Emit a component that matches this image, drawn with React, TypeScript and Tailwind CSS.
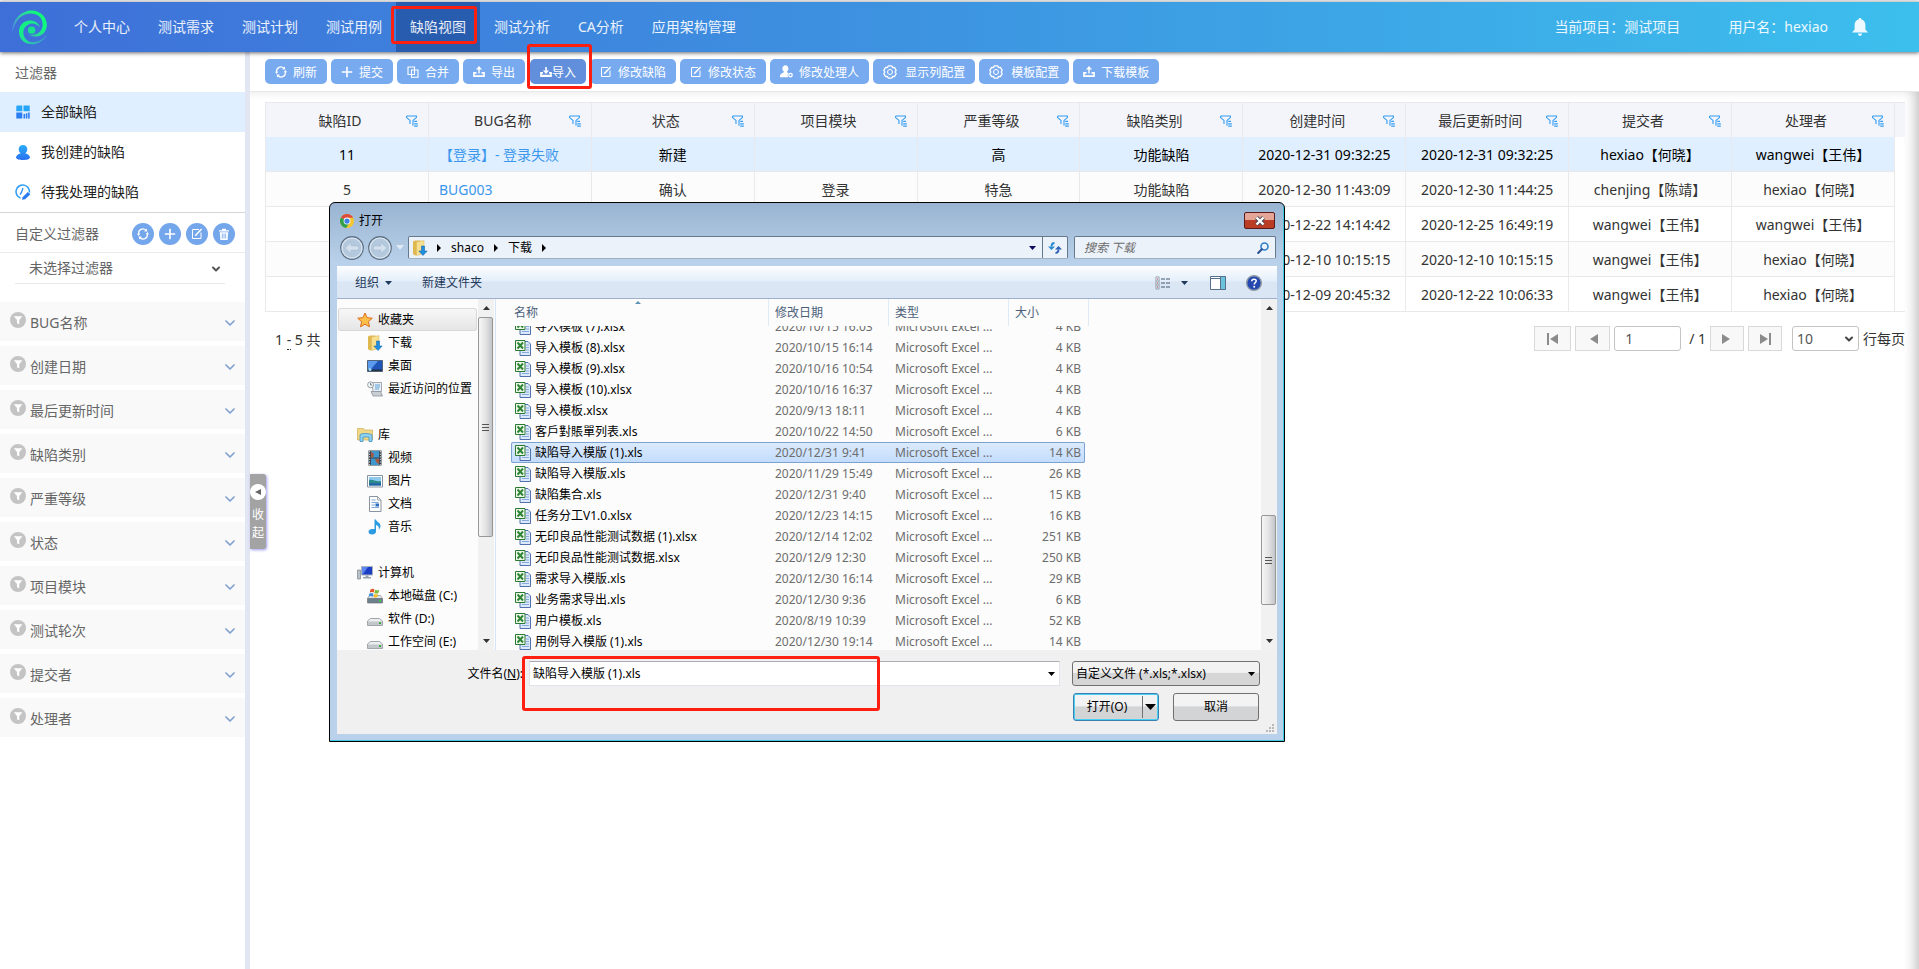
import React from "react";
import clsx from "clsx";
import { ChevronDown } from "lucide-react";

/* ---------- icons: web application ---------- */

const Logo = () => (
  <svg viewBox="0 0 108 104" className="h-[35px] w-[36px]" aria-hidden="true">
    <defs>
      <linearGradient id="swirlA" x1="0" y1="0.8" x2="1" y2="0.3">
        <stop offset="0" stopColor="#4f86ea" />
        <stop offset="0.4" stopColor="#38c6a8" />
        <stop offset="0.8" stopColor="#10fb7c" />
      </linearGradient>
      <linearGradient id="swirlB" x1="0" y1="0.2" x2="1" y2="1">
        <stop offset="0" stopColor="#10f57f" />
        <stop offset="0.5" stopColor="#22dd98" />
        <stop offset="1" stopColor="#4a86e6" />
      </linearGradient>
    </defs>
    <path fill="url(#swirlA)" d="M1 68C0 22 34 -1 62 1C92 4 107 28 104 49C100 75 76 87 50 74C76 76 90 64 92 46C93 22 77 9 54 10C28 11 9 30 1 68Z" />
    <path fill="url(#swirlB)" d="M107 70C94 96 72 106 50 101C29 96 20 78 21 62C23 40 42 28 62 32C72 34 80 40 84 51C72 40 58 37 48 44C35 51 31 65 36 78C42 92 57 99 73 95C90 90 99 82 107 70Z" />
    <circle cx="59" cy="60" r="11" fill="#18e28d" />
  </svg>
);

const Bell = () => (
  <svg viewBox="0 0 16 18" className="h-[18px] w-4" fill="#eef8ff" aria-hidden="true">
    <path d="M8 0c.8 0 1.200.5 1.200 1.300C12 2 13.400 4.400 13.400 7v4.500L16 14.500H0l2.600-3V7C2.600 4.400 4 2 6.800 1.300 6.800.5 7.200 0 8 0zM6 15.500h4C10 17 9 18 8 18s-2-1-2-2.500z" />
  </svg>
);

type IconProps = { className?: string };

const RefreshIcon = ({ className }: IconProps) => (
  <svg viewBox="0 0 12 12" className={className} fill="none" stroke="#fff" strokeWidth="1.300" aria-hidden="true">
    <path d="M1.600 7V5.500A4.200 4.200 0 0 1 8.800 2.300M10.400 5v1.500A4.200 4.200 0 0 1 3.200 9.700" />
    <path fill="#fff" stroke="none" d="M7.200 3.600L10.400 3.400 9.600.4zM4.800 8.400L1.600 8.600l.8 3zM0 5.800h3.200L1.600 8zM8.800 6.200H12L10.400 4z" />
  </svg>
);
const PlusIcon = ({ className }: IconProps) => (
  <svg viewBox="0 0 12 12" className={className} fill="none" stroke="#fff" strokeWidth="1.600" aria-hidden="true">
    <path d="M6 .8v10.400M.8 6h10.400" />
  </svg>
);
const MergeIcon = ({ className }: IconProps) => (
  <svg viewBox="0 0 12 12" className={className} fill="none" stroke="#fff" strokeWidth="1.100" aria-hidden="true">
    <path d="M1 1h6.500v7.500H1zM4.500 4H11v7.200H4.500z" />
  </svg>
);
const UploadIcon = ({ className }: IconProps) => (
  <svg viewBox="0 0 12 12" className={className} fill="none" stroke="#fff" strokeWidth="1.400" aria-hidden="true">
    <path d="M6 7.500V1.500" />
    <path fill="#fff" stroke="none" d="M6 0L9 3.600H3z" />
    <path strokeWidth="1.700" d="M3.500 6.800H1v3.400h10V6.800H8.500" />
  </svg>
);
const ImportIcon = ({ className }: IconProps) => (
  <svg viewBox="0 0 12 12" className={className} aria-hidden="true">
    <path fill="#fff" d="M5.200 1h1.600v3.500h2.400L6 8 2.800 4.500h2.400z" />
    <path fill="none" stroke="#fff" strokeWidth="1.700" d="M3 6.800H1v3.400h10V6.800H9M1 9.500h10" />
  </svg>
);
const EditIcon = ({ className }: IconProps) => (
  <svg viewBox="0 0 12 12" className={className} fill="none" stroke="#fff" strokeWidth="1" aria-hidden="true">
    <path d="M8 1.500H1.500v9h8.500V4.500" />
    <path d="M4.200 7.800L10.600 1" strokeWidth="1.500" />
  </svg>
);
const UserIcon = ({ className }: IconProps) => (
  <svg viewBox="0 0 12 12" className={className} fill="#fff" aria-hidden="true">
    <path d="M5 .3c1.700 0 2.800 1.300 2.800 3 0 1.200-.5 2-1.300 2.700v.7l1.300.6c-.9 1-1 2.700-.2 3.900H0V9.800C0 8.500 1.800 7.800 3.500 6.700V6C2.700 5.300 2.200 4.500 2.200 3.300 2.200 1.600 3.300.3 5 .3z" />
    <circle cx="9.700" cy="9.300" r="1.600" fill="none" stroke="#fff" strokeWidth="1.200" />
  </svg>
);
const GearIcon = ({ className }: IconProps) => (
  <svg viewBox="0 0 14 14" className={className} fill="none" stroke="#fff" aria-hidden="true">
    <path d="M5.200.9h3.600l.7 1.700 1.900-.2 1.800 3L12.100 7l1.100 1.600-1.800 3-1.900-.2-.7 1.700H5.200l-.7-1.700-1.900.2-1.800-3L1.900 7 .8 5.400l1.800-3 1.900.2z" strokeWidth="1.300" strokeLinejoin="round" />
    <path d="M7 4.300l2.300 1.350v2.700L7 9.700 4.700 8.350v-2.700z" strokeWidth="1" />
  </svg>
);
const TrashIcon = ({ className }: IconProps) => (
  <svg viewBox="0 0 12 12" className={className} aria-hidden="true">
    <path fill="#fff" d="M1 2.200h3V.8h4v1.400h3v1.200H1zM1.800 4.200h8.400L9.600 12H2.400z" />
    <path stroke="#74a6ec" strokeWidth=".8" d="M4.300 5.500v5M6 5.500v5M7.700 5.500v5" />
  </svg>
);

const ColumnFilterIcon = () => (
  <svg viewBox="0 0 12 12" className="h-3 w-3 shrink-0" fill="none" stroke="#2f9bf4" aria-hidden="true">
    <path strokeWidth="1.100" d="M.6 1h9.800v1.600L7 5.400v5.400M.6 1v1.600L4 5.400V9" />
    <path strokeWidth="1.300" d="M8.200 6.400H11M8.200 8.800h3.600M8.200 11.200h3.600" />
  </svg>
);

const FunnelBadge = () => (
  <svg viewBox="0 0 16 16" className="mb-1.5 h-4 w-4 shrink-0" aria-hidden="true">
    <circle cx="8" cy="8" r="8" fill="#c4c4c4" />
    <path fill="#fff" d="M3.800 4.200h8.600L9.300 8v4.300l-2.300-1V8z" />
  </svg>
);

const GridIcon = () => (
  <svg viewBox="0 0 14 14" className="h-3.5 w-3.5" aria-hidden="true">
    <path fill="#27a5f8" d="M1 .5h5.300v5.800H.3V1.200zM7.500.5H13.700v5.800H7.500z" />
    <path fill="#2b7df3" d="M.3 7.500h6v6h-6zM7.500 9h1.600v4.500H7.500zM9.800 8.200h1.600v5.300H9.800zM12.100 7.500h1.600v6h-1.600z" />
  </svg>
);
const PersonIcon = () => (
  <svg viewBox="0 0 14 15" className="h-[15px] w-3.5" aria-hidden="true">
    <defs>
      <linearGradient id="person" x1="0" y1="0" x2="0" y2="1">
        <stop offset="0" stopColor="#29adf8" />
        <stop offset="1" stopColor="#2a70f2" />
      </linearGradient>
    </defs>
    <path fill="url(#person)" d="M7 0c2.600 0 4.300 1.800 4.300 4.200 0 1.800-.9 3.200-2 4C12 9 14 10.500 14 12.500 14 14.200 10.500 15 7 15s-7-.8-7-2.500c0-2 2-3.500 4.700-4.300-1.100-.8-2-2.200-2-4C2.700 1.800 4.400 0 7 0z" />
  </svg>
);
const PendingIcon = () => (
  <svg viewBox="0 0 16 16" className="h-4 w-4" fill="none" aria-hidden="true">
    <path stroke="#2b9df6" strokeWidth="1.500" d="M5.500 14A6.700 6.700 0 1 1 14.400 8.500" />
    <path stroke="#2b8cf4" strokeWidth="1.300" d="M8 4L6.500 8.500 5 10.500" />
    <path fill="#2a7af2" d="M7 15.800l.6-2.600 5.200-5.300 2.600 2.400-5.300 5z" />
  </svg>
);

/* ---------- icons: file dialog ---------- */

const svg16 = "h-4 w-4 shrink-0";

const ChromeIcon = () => (
  <svg viewBox="0 0 16 16" className="h-3.5 w-3.5" aria-hidden="true">
    <circle cx="8" cy="8" r="8" fill="#f6c62f" />
    <path fill="#dd4b3e" d="M8 8L1.100 4A8 8 0 0 1 15 4.200H8z" />
    <path fill="#2fa04f" d="M8 8L1.100 4a8 8 0 0 0 5.800 11.900L11 9.800z" />
    <circle cx="8" cy="8" r="3.900" fill="#fff" />
    <circle cx="8" cy="8" r="3" fill="#3f7fe8" />
  </svg>
);
const DownloadFolder = () => (
  <svg viewBox="0 0 16 16" className={svg16} aria-hidden="true">
    <path fill="#e0b850" d="M1 1.500L3 .5h5.500v13L3 15.500 1 14z" />
    <path fill="#f7df90" stroke="#d9b45a" strokeWidth=".5" d="M4.500 2L12 .6v12.900l-7.500 2z" />
    <path fill="#1f8fe0" stroke="#0f5fa8" strokeWidth=".5" d="M9.500 6h3v5h2.700L11 15.500 6.800 11h2.700z" />
  </svg>
);
const StarIcon = () => (
  <svg viewBox="0 0 16 16" className={svg16} aria-hidden="true">
    <path fill="#fcc04a" stroke="#dd6f1c" d="M8 1l2.100 4.700 5.200.5-3.900 3.500 1.100 5.100L8 12.200l-4.500 2.600 1.100-5.100L.7 6.200l5.200-.5z" />
  </svg>
);
const DesktopIcon = () => (
  <svg viewBox="0 0 16 16" className={svg16} aria-hidden="true">
    <path fill="#1f56b8" stroke="#53637c" d="M.5 2.500h15v11H.5z" />
    <path fill="#5b9bee" d="M1 3h10L4 11H1z" />
    <path fill="#26303f" d="M1 11.500h14V13H1z" />
    <circle cx="3" cy="11.500" r="1.500" fill="#9bd8f5" />
  </svg>
);
const RecentIcon = () => (
  <svg viewBox="0 0 16 16" className={svg16} aria-hidden="true">
    <path fill="#e9eef3" stroke="#8c969f" strokeWidth=".8" d="M5 1.500h9.500v9H6z" />
    <path stroke="#5aa2dc" d="M8 4h5M8 6h5M8 8h4" />
    <path fill="#c9ced3" stroke="#8c969f" strokeWidth=".8" d="M4 10.500h9.500l2 4.500H6z" />
    <circle cx="3.600" cy="3.800" r="3" fill="#f4f7f9" stroke="#8c969f" strokeWidth=".9" />
    <path stroke="#55606a" strokeWidth=".8" fill="none" d="M3.600 2v2h1.500" />
  </svg>
);
const LibraryIcon = () => (
  <svg viewBox="0 0 16 16" className={svg16} aria-hidden="true">
    <path fill="#f0d886" stroke="#cfae55" strokeWidth=".7" d="M.5 1.500h6l1 1.500h8v10H.5z" />
    <path fill="#8fd2f2" stroke="#3e92c4" strokeWidth=".8" d="M3 8c0-2 10-2 12 0v6.500h-3V10H6v4.500H3z" />
  </svg>
);
const VideoIcon = () => (
  <svg viewBox="0 0 16 16" className={svg16} aria-hidden="true">
    <path fill="#333c44" d="M1.500.5h13v15h-13z" />
    <path fill="#3f97cf" d="M4 1h8v6.500H4zM4 8.500h8V15H4z" />
    <path fill="#a8583f" d="M4 1.500l3 2.500-1 3.500H4zM12 8.500l-4 1 1.500 3L12 14z" />
    <path stroke="#dfe6ea" strokeDasharray="1.300 1.300" d="M2.700 1v14M13.300 1v14" />
  </svg>
);
const PictureIcon = () => (
  <svg viewBox="0 0 16 16" className={svg16} aria-hidden="true">
    <path fill="#fff" stroke="#8894a0" d="M.5 2.500h15v11.500H.5z" />
    <path fill="#8ec9ee" d="M2 4h12v5H2z" />
    <path fill="#2c8a8c" d="M2 7c4-1 7 2 12 1v4.500H2z" />
    <path fill="#2462a8" d="M2 10.500c4-1 8 .5 12-.5v2.500H2z" />
  </svg>
);
const DocIcon = () => (
  <svg viewBox="0 0 16 16" className={svg16} aria-hidden="true">
    <path fill="#fdfdfe" stroke="#8a94a0" d="M2.500.5h8l3.500 3.500v11.500H2.500z" />
    <path fill="none" stroke="#8a94a0" strokeWidth=".8" d="M10.500.5V4H14" />
    <path stroke="#6d9fd0" strokeWidth=".9" d="M4.500 4h4M4.500 6.500h7M4.500 9H8M4.500 11.500H12" />
    <path fill="#2a6fc0" d="M8.500 7.500h3.500v3H8.500z" />
  </svg>
);
const MusicIcon = () => (
  <svg viewBox="0 0 16 16" className={svg16} aria-hidden="true">
    <path fill="#2c9be0" d="M7.500.5h1.300C9.500 3 13.500 3.500 13.500 7c0 2-1 3-1.800 3.500.8-2.500-.7-4-2.700-4.500v6.500c0 2-1.700 3-4 3s-3.500-1.200-3.500-2.700c0-1.800 2-3 4-2.800h2z" />
  </svg>
);
const ComputerIcon = () => (
  <svg viewBox="0 0 16 16" className={svg16} aria-hidden="true">
    <path fill="#b9c1c9" stroke="#7a848e" strokeWidth=".7" d="M.5 5h3v9h-3z" />
    <path fill="#1b3fc4" stroke="#a9b3bd" d="M4.500 1.500h11v8.500h-11z" />
    <path fill="#5b86f0" d="M5 2h6L6 9H5z" />
    <path fill="#98a2ac" d="M8.500 10.500h3V12h2.500v1.500H6V12h2.500z" />
  </svg>
);
const DriveIcon = ({ system = false }: { system?: boolean }) => (
  <svg viewBox="0 0 16 16" className={svg16} aria-hidden="true">
    {system ? (
      <g>
        <path fill="#dfe3e6" stroke="#8b9298" strokeWidth=".7" d="M2.500 7.500h11l2 3H.5z" />
        <path fill="#6b7f8c" stroke="#70777d" strokeWidth=".7" d="M.5 10.500h15V15H.5z" />
        <path fill="#37d53b" d="M12 12h2v1.800h-2z" />
        <path fill="#e5582c" d="M3.500 1.500c1.500-1 2.800-.8 4 0L6.700 4.600c-1.300-.8-2.600-.8-4 0z" />
        <path fill="#7cbb3a" d="M8.200 1.700c1.500.8 2.600.8 4.100 0l-.9 3.200c-1.400.8-2.600.7-4 0z" />
        <path fill="#3d8ddd" d="M2.400 5.500c1.500-.8 2.700-.7 4 0l-.8 3.200c-1.400-.8-2.600-.8-4 0z" />
        <path fill="#f6c02e" d="M7.200 5.800c1.400.8 2.600.8 4 0L10.400 9c-1.500.8-2.700.8-4 0z" />
      </g>
    ) : (
      <g>
        <path fill="#eceeef" stroke="#8b9298" strokeWidth=".8" d="M3.500 7.500h9l3 2.500v4.500H.5V10z" />
        <path fill="#c2c7cb" d="M1 10.500h14V14H1z" />
        <path fill="#2fa833" d="M12 11.300h2v1.800h-2z" />
      </g>
    )}
  </svg>
);
const ExcelIcon = () => (
  <svg viewBox="0 0 16 16" className={svg16} aria-hidden="true">
    <path fill="#dce9fb" stroke="#3f62a8" strokeWidth=".9" d="M5 1.500h8l2.500 2.500v11.500H5z" />
    <path stroke="#7ea2da" strokeWidth=".9" d="M11 5h3M11 7.500h3M11 10h3M7 12.500h7" />
    <path fill="#eef7ea" stroke="#2c7a32" d="M.5.5h9.500v10H.5z" />
    <path stroke="#2c8434" strokeWidth="1.900" d="M2.500 2.500l5.500 6M8 2.500l-5.500 6" />
  </svg>
);

const Caret = ({ color = "#000", className = "h-1 w-[7px]" }: { color?: string; className?: string }) => (
  <svg viewBox="0 0 8 4" className={clsx("shrink-0", className)} preserveAspectRatio="none" aria-hidden="true">
    <path fill={color} d="M0 0h8L4 4z" />
  </svg>
);
const Crumb = () => (
  <svg viewBox="0 0 4 8" className="h-2 w-1 shrink-0" aria-hidden="true">
    <path d="M0 0v8l4-4z" />
  </svg>
);

/* ---------- data ---------- */

const navItems = ["个人中心", "测试需求", "测试计划", "测试用例", "缺陷视图", "测试分析", "CA分析", "应用架构管理"];

const views = [
  { label: "全部缺陷", icon: <GridIcon />, active: true },
  { label: "我创建的缺陷", icon: <PersonIcon />, active: false },
  { label: "待我处理的缺陷", icon: <PendingIcon />, active: false },
];

const filters = ["BUG名称", "创建日期", "最后更新时间", "缺陷类别", "严重等级", "状态", "项目模块", "测试轮次", "提交者", "处理者"];

const compact = { icon: "h-3 w-3", gap: "gap-1.5" };
const medium = { icon: "h-[13px] w-[13px]", gap: "gap-1.5" };
const roomy = { icon: "h-3.5 w-3.5", gap: "gap-2" };

const actions = [
  { label: "刷新", Icon: RefreshIcon, size: compact },
  { label: "提交", Icon: PlusIcon, size: compact },
  { label: "合并", Icon: MergeIcon, size: compact },
  { label: "导出", Icon: UploadIcon, size: compact },
  { label: "导入", Icon: ImportIcon, size: compact },
  { label: "修改缺陷", Icon: EditIcon, size: compact },
  { label: "修改状态", Icon: EditIcon, size: compact },
  { label: "修改处理人", Icon: UserIcon, size: medium },
  { label: "显示列配置", Icon: GearIcon, size: roomy },
  { label: "模板配置", Icon: GearIcon, size: roomy },
  { label: "下载模板", Icon: UploadIcon, size: compact },
];

const columns = ["缺陷ID", "BUG名称", "状态", "项目模块", "严重等级", "缺陷类别", "创建时间", "最后更新时间", "提交者", "处理者"];

const bugs = [
  ["11", "【登录】- 登录失败", "新建", "", "高", "功能缺陷", "2020-12-31 09:32:25", "2020-12-31 09:32:25", "hexiao【何晓】", "wangwei【王伟】"],
  ["5", "BUG003", "确认", "登录", "特急", "功能缺陷", "2020-12-30 11:43:09", "2020-12-30 11:44:25", "chenjing【陈靖】", "hexiao【何晓】"],
  ["", "", "", "", "", "", "2020-12-22 14:14:42", "2020-12-25 16:49:19", "wangwei【王伟】", "wangwei【王伟】"],
  ["", "", "", "", "", "", "2020-12-10 10:15:15", "2020-12-10 10:15:15", "wangwei【王伟】", "hexiao【何晓】"],
  ["", "", "", "", "", "", "2020-12-09 20:45:32", "2020-12-22 10:06:33", "wangwei【王伟】", "hexiao【何晓】"],
];

const places = [
  {
    label: "收藏夹",
    icon: <StarIcon />,
    children: [
      { label: "下载", icon: <DownloadFolder /> },
      { label: "桌面", icon: <DesktopIcon /> },
      { label: "最近访问的位置", icon: <RecentIcon /> },
    ],
  },
  {
    label: "库",
    icon: <LibraryIcon />,
    children: [
      { label: "视频", icon: <VideoIcon /> },
      { label: "图片", icon: <PictureIcon /> },
      { label: "文档", icon: <DocIcon /> },
      { label: "音乐", icon: <MusicIcon /> },
    ],
  },
  {
    label: "计算机",
    icon: <ComputerIcon />,
    children: [
      { label: "本地磁盘 (C:)", icon: <DriveIcon system /> },
      { label: "软件 (D:)", icon: <DriveIcon /> },
      { label: "工作空间 (E:)", icon: <DriveIcon /> },
    ],
  },
];

const files = [
  ["导入模板 (7).xlsx", "2020/10/15 16:03", "4 KB"],
  ["导入模板 (8).xlsx", "2020/10/15 16:14", "4 KB"],
  ["导入模板 (9).xlsx", "2020/10/16 10:54", "4 KB"],
  ["导入模板 (10).xlsx", "2020/10/16 16:37", "4 KB"],
  ["导入模板.xlsx", "2020/9/13 18:11", "4 KB"],
  ["客戶對賬單列表.xls", "2020/10/22 14:50", "6 KB"],
  ["缺陷导入模版 (1).xls", "2020/12/31 9:41", "14 KB"],
  ["缺陷导入模版.xls", "2020/11/29 15:49", "26 KB"],
  ["缺陷集合.xls", "2020/12/31 9:40", "15 KB"],
  ["任务分工V1.0.xlsx", "2020/12/23 14:15", "16 KB"],
  ["无印良品性能测试数据 (1).xlsx", "2020/12/14 12:02", "251 KB"],
  ["无印良品性能测试数据.xlsx", "2020/12/9 12:30", "250 KB"],
  ["需求导入模版.xls", "2020/12/30 16:14", "29 KB"],
  ["业务需求导出.xls", "2020/12/30 9:36", "6 KB"],
  ["用户模板.xls", "2020/8/19 10:39", "52 KB"],
  ["用例导入模版 (1).xls", "2020/12/30 19:14", "14 KB"],
];
const selectedFile = "缺陷导入模版 (1).xls";

/* ---------- page parts ---------- */

const Highlight = ({ className }: { className: string }) => (
  <span className={clsx("pointer-events-none absolute z-30 rounded-[3px] border-3 border-[#ff1f10]", className)} />
);

function TopBar() {
  return (
    <header className="relative z-20 flex h-[51px] items-stretch border-t border-[#cfcfcf] bg-linear-to-r from-[#3e6fd8] via-[#3d95e1] to-[#3cbfed] text-sm text-white/90 shadow-[0_1px_4px_rgba(0,0,0,0.6)]">
      <div className="flex w-[60px] items-center pl-3">
        <Logo />
      </div>
      <nav className="flex">
        {navItems.map((item) => (
          <a
            key={item}
            href="#"
            className={clsx("relative flex items-center px-3.5", item === "缺陷视图" && "bg-[#285cae]")}
          >
            {item}
            {item === "缺陷视图" && <Highlight className="top-[4px] -left-[5px] h-[38px] w-[86px]" />}
          </a>
        ))}
      </nav>
      <div className="ml-auto flex items-center pr-[51px]">
        <span>当前项目：测试项目</span>
        <span className="ml-12">用户名：hexiao</span>
        <button type="button" aria-label="通知" className="ml-6">
          <Bell />
        </button>
      </div>
    </header>
  );
}

function Sidebar() {
  return (
    <aside className="w-[250px] shrink-0 border-r-5 border-[#e2e5f2] bg-white text-sm text-[#666]">
      <h2 className="flex h-10 items-center px-[15px] pt-[2px]">过滤器</h2>
      <ul className="border-b border-[#d5d5d5] text-[#222]">
        {views.map((v) => (
          <li key={v.label}>
            <a href="#" className={clsx("flex h-10 items-center gap-2.5 px-[15px]", v.active && "bg-[#dfefff]")}>
              <span className="flex w-4 justify-center">{v.icon}</span>
              {v.label}
            </a>
          </li>
        ))}
      </ul>
      <div className="flex h-10 items-center justify-between border-b border-[#ebebeb] pt-[2px] pr-2.5 pl-[15px]">
        <h2>自定义过滤器</h2>
        <div className="flex gap-[5px]">
          {[
            { name: "刷新过滤器", Icon: RefreshIcon },
            { name: "新建过滤器", Icon: PlusIcon },
            { name: "编辑过滤器", Icon: EditIcon },
            { name: "删除过滤器", Icon: TrashIcon },
          ].map(({ name, Icon }) => (
            <button key={name} type="button" aria-label={name} className="flex h-[22px] w-[22px] items-center justify-center rounded-full bg-[#74a6ec]">
              <Icon className="h-3 w-3" />
            </button>
          ))}
        </div>
      </div>
      <div className="relative mr-5 ml-[15px] border-b border-[#e8e8e8]">
        <select aria-label="选择过滤器" className="h-[30px] w-full appearance-none bg-transparent pl-3.5">
          <option>未选择过滤器</option>
        </select>
        <ChevronDown className="pointer-events-none absolute top-2.5 right-[3px] h-3 w-3 text-[#555]" strokeWidth={4} />
      </div>
      <ul className="mt-[18px] flex flex-col gap-[5px]">
        {filters.map((f) => (
          <li key={f}>
            <button type="button" className="flex h-[39px] w-full items-center bg-[#f9f9f9] pt-[2px] pr-[7px] pl-2.5">
              <FunnelBadge />
              <span className="ml-1">{f}</span>
              <ChevronDown className="ml-auto h-4 w-4 text-[#7f9fcf]" strokeWidth={2.5} />
            </button>
          </li>
        ))}
      </ul>
    </aside>
  );
}

function Toolbar() {
  return (
    <div className="flex h-10 items-center gap-1 border-b border-[#e9e9e9] pl-[15px] text-xs text-white">
      {actions.map(({ label, Icon, size }) => {
        const isImport = label === "导入";
        return (
          <button
            key={label}
            type="button"
            className={clsx(
              "relative flex h-[25px] items-center rounded-[5px] px-2.5",
              isImport ? "ml-px bg-[#618fdc]" : "bg-[#78aaef]",
              !isImport && size.gap,
            )}
          >
            <Icon className={clsx("shrink-0", size.icon)} />
            <span className="pt-[2px]">{label}</span>
            {isImport && <Highlight className="-top-[15px] -left-[3px] h-[45px] w-[65px]" />}
          </button>
        );
      })}
    </div>
  );
}

function BugTable() {
  return (
    <table className="w-full table-fixed border-separate border-spacing-0 border-t border-l border-[#e9e9ec] text-center text-sm text-[#333]">
      <colgroup>
        {columns.map((c) => (
          <col key={c} />
        ))}
        <col className="w-2.5" />
      </colgroup>
      <thead>
        <tr className="h-[34px] bg-[#f4f5fa]">
          {columns.map((c) => (
            <th key={c} className="border-r border-[#e9e9ec] p-0 font-normal">
              <span className="flex items-center pt-[2px] pr-2.5 pl-2">
                <span className="flex-1 whitespace-nowrap">{c}</span>
                <ColumnFilterIcon />
              </span>
            </th>
          ))}
          <th className="p-0" />
        </tr>
      </thead>
      <tbody>
        {bugs.map((row, r) => (
          <tr key={r} className="h-[35px]">
            {row.map((cell, c) => (
              <td
                key={c}
                className={clsx(
                  "border-r border-b border-[#e9e9ec] p-0 pt-[2px] whitespace-nowrap",
                  r === 0 ? "bg-[#dfefff] text-black" : r % 2 ? "bg-[#fcfcfc]" : "bg-white",
                  c === 1 && "pl-2.5 text-left",
                )}
              >
                {c === 1 ? (
                  <a href="#" className="text-[#3b97ee]">
                    {cell}
                  </a>
                ) : (
                  cell
                )}
              </td>
            ))}
            <td className={clsx("p-0", r === bugs.length - 1 && "border-b border-[#e9e9ec]")} />
          </tr>
        ))}
      </tbody>
    </table>
  );
}

const pagerButton = "flex h-[25px] items-center justify-center border border-[#d9d9d9] bg-[#f8f8f8]";

const PagerGlyph = ({ flip = false, bar = false }: { flip?: boolean; bar?: boolean }) => (
  <svg viewBox="0 0 14 12" className={clsx("h-3 w-3.5", flip && "rotate-180")} fill="#8b8b8b" aria-hidden="true">
    {bar && <path d="M1 0h2v12H1z" />}
    <path d="M12 1v10L4 6z" />
  </svg>
);

function Pager() {
  return (
    <div className="mt-3.5 flex items-center pl-2.5 text-sm text-[#333]">
      <span className="pt-[2px]">
        1 <span className="border-b border-dotted border-[#333]">-</span> 5 共
      </span>
      <div className="ml-auto flex items-center">
        <button type="button" aria-label="第一页" className={clsx(pagerButton, "w-[37px]")}>
          <PagerGlyph bar />
        </button>
        <button type="button" aria-label="上一页" className={clsx(pagerButton, "ml-1 w-[35px]")}>
          <PagerGlyph />
        </button>
        <input aria-label="页码" defaultValue="1" className="ml-1 h-[25px] w-[67px] rounded-[3px] border border-[#c4c4c4] bg-white pl-2.5 text-[#555]" />
        <span className="mx-1 pl-1">/ 1</span>
        <button type="button" aria-label="下一页" className={clsx(pagerButton, "w-[34px]")}>
          <PagerGlyph flip />
        </button>
        <button type="button" aria-label="最后一页" className={clsx(pagerButton, "ml-1 w-[34px]")}>
          <PagerGlyph flip bar />
        </button>
        <span className="relative ml-2.5">
          <select id="page-size" className="h-[25px] w-[67px] appearance-none rounded-[3px] border border-[#c4c4c4] bg-white pl-1 text-[#555]">
            <option>10</option>
          </select>
          <ChevronDown className="pointer-events-none absolute top-[7px] right-1 h-3 w-3 text-[#444]" strokeWidth={4} />
        </span>
        <label htmlFor="page-size" className="ml-1">
          行每页
        </label>
      </div>
    </div>
  );
}

function ScrollTrack({ children }: { children: React.ReactNode }) {
  return (
    <div className="flex w-4 shrink-0 flex-col items-center bg-[#f1f1f1]" aria-hidden="true">
      <div className="flex h-[18px] items-center">
        <Caret color="#333" className="h-1 w-[7px] rotate-180" />
      </div>
      <div className="flex w-full flex-1 flex-col pr-px">{children}</div>
      <div className="flex h-[18px] items-center">
        <Caret color="#333" />
      </div>
    </div>
  );
}
const ScrollThumb = ({ className }: { className: string }) => (
  <div className={clsx("flex flex-col items-center justify-center gap-[2px] rounded-[2px] border border-[#979797] bg-linear-to-r from-[#f6f6f6] via-[#e4e4e5] to-[#c3c5c9]", className)}>
    <i className="h-px w-[7px] bg-[#555]" />
    <i className="h-px w-[7px] bg-[#555]" />
    <i className="h-px w-[7px] bg-[#555]" />
  </div>
);

const RoundNav = ({ flip = false, label }: { flip?: boolean; label: string }) => (
  <button type="button" aria-label={label} className="h-6 w-6">
    <svg viewBox="0 0 26 26" className={clsx("h-full w-full", flip && "rotate-180")} aria-hidden="true">
      <circle cx="13" cy="13" r="12.200" fill="#b4c9de" stroke="#5f7184" strokeWidth="1.400" />
      <circle cx="13" cy="13" r="10.800" fill="none" stroke="#dde8f2" strokeWidth="1.200" />
      <path fill="#d3e1ee" stroke="#a5bacd" strokeWidth=".6" d="M5.500 13L12 7v3.800h8v4.400h-8V19z" />
    </svg>
  </button>
);

const winButton = "flex h-7 items-center justify-center rounded-[3px] border bg-linear-to-b from-[#f3f3f3] from-45% to-[#d2d4d5] to-50%";
const fieldFrame = "flex h-[23px] items-center border border-[#66788c] border-b-[#9fb2c6] bg-[#ebf2fa]";

function FileDialog() {
  return (
    <section
      role="dialog"
      aria-label="打开"
      className="absolute top-[202px] left-[329px] z-30 w-[956px] rounded-t-[6px] border border-black bg-[#b9d1ea] bg-linear-to-b from-[#99b4d1] to-[#b9d1ea] to-[60px] px-[7px] pb-[7px] text-xs text-black shadow-[inset_-1px_-1px_0_#3cc8e0]"
    >
      <div className="flex h-[33px] items-center pt-[2px] pl-[3px]">
        <ChromeIcon />
        <span className="ml-[5px]">打开</span>
        <button
          type="button"
          aria-label="关闭"
          className="mr-0.5 ml-auto flex h-[17px] w-[31px] items-center justify-center rounded-[2px] border border-[#5b1a1c] bg-linear-to-b from-[#e5a698] from-45% to-[#bb3c25] to-50%"
        >
          <svg viewBox="0 0 12 10" className="h-2.5 w-3" aria-hidden="true">
            <path d="M2.500 1.500l7 7M9.500 1.500l-7 7" stroke="#4a4a55" strokeWidth="4.200" />
            <path d="M2.500 1.500l7 7M9.500 1.500l-7 7" stroke="#fff" strokeWidth="2.400" />
          </svg>
        </button>
      </div>

      <div className="flex h-[23px] items-center pl-[3px]">
        <RoundNav label="后退" />
        <span className="ml-1 flex">
          <RoundNav label="前进" flip />
        </span>
        <Caret color="#dfe9f4" className="mx-1 h-[5px] w-2" />
        <div className={clsx(fieldFrame, "flex-1 rounded-[2px] pl-[3px]")}>
          <DownloadFolder />
          <span className="ml-[9px] flex items-center gap-2.5">
            <Crumb />
            shaco
            <Crumb />
            下载
            <Crumb />
          </span>
          <span className="mr-1.5 ml-auto flex">
            <Caret color="#0a0a5a" />
          </span>
          <button type="button" aria-label="刷新" className="flex h-full w-[25px] items-center justify-center border-l border-[#66788c]">
            <svg viewBox="0 0 14 12" className="h-3 w-3.5" fill="none" aria-hidden="true">
              <path stroke="#2a8ad0" strokeWidth="1.800" d="M6.500 1C4.500 1 3.500 2 3.500 4.500" />
              <path fill="#2a8ad0" d="M0 4.500h7L3.500 8z" />
              <path stroke="#2a5fb4" strokeWidth="1.800" d="M7.500 11c2 0 3-1 3-3.500" />
              <path fill="#2a5fb4" d="M7 7.500h7L10.500 4z" />
            </svg>
          </button>
        </div>
        <div className={clsx(fieldFrame, "mr-px ml-1.5 w-[202px] rounded-[2px] pr-1.5 pl-[9px]")}>
          <input aria-label="搜索" placeholder="搜索 下载" className="min-w-0 flex-1 bg-transparent italic placeholder:text-[#6b6b6b]" />
          <svg viewBox="0 0 12 12" className="h-3 w-3" fill="none" aria-hidden="true">
            <circle cx="7.500" cy="4.500" r="3.500" stroke="#2f80c8" strokeWidth="1.600" />
            <path stroke="#2c4f92" strokeWidth="2" strokeLinecap="round" d="M4.800 7.300L1.200 11" />
          </svg>
        </div>
      </div>

      <div className="mt-[7px] flex h-[33px] items-center border-t border-b border-t-white border-b-[#9fb0cc] bg-linear-to-b from-[#fbfdff] via-[#e4eefa] via-45% to-[#dbe6f4] to-50% pr-[15px] pl-[18px] text-[#1e395b]">
        <button type="button" className="flex items-center gap-1.5">
          组织
          <Caret color="#1e395b" />
        </button>
        <button type="button" className="ml-[30px]">
          新建文件夹
        </button>
        <div className="ml-auto flex items-center">
          <button type="button" aria-label="更改视图" className="flex items-center gap-2.5">
            <svg viewBox="0 0 16 14" className="h-3.5 w-4" fill="none" aria-hidden="true">
              <path stroke="#8a96a4" strokeWidth=".8" d="M.9.9h3.200v12.200H.9zM.9 5h3.200M.9 9h3.200" />
              <path stroke="#44586e" strokeDasharray="4 1" d="M6 3h10M6 7h10M6 11h10" />
              <path fill="#c04030" d="M2 2.400h1v1H2zM2 6.500h1v1H2zM2 10.500h1v1H2z" />
            </svg>
            <Caret color="#1e395b" />
          </button>
          <button type="button" aria-label="预览窗格" className="ml-[22px]">
            <svg viewBox="0 0 16 14" className="h-3.5 w-4" aria-hidden="true">
              <path fill="#fff" stroke="#56708c" d="M.5.5h15v13H.5z" />
              <path stroke="#56708c" d="M.5 2.500h10" />
              <path fill="#6cc4dc" stroke="#56708c" d="M10.500.5h5v13h-5z" />
            </svg>
          </button>
          <button type="button" aria-label="帮助" className="ml-5">
            <svg viewBox="0 0 16 16" className="h-4 w-4" aria-hidden="true">
              <circle cx="8" cy="8" r="7.300" fill="#2448b0" stroke="#8d97a5" strokeWidth="1.400" />
              <path d="M5.800 6.200C5.800 3.500 10.200 3.500 10.200 6c0 1.600-2 1.700-2 3.400" stroke="#fff" strokeWidth="1.500" fill="none" />
              <circle cx="8.200" cy="11.700" r="1" fill="#fff" />
            </svg>
          </button>
        </div>
      </div>

      <div className="flex h-[351px] bg-[#fcfcfc]">
        <div className="w-[141px] shrink-0 overflow-hidden pt-[9px] pr-px pl-px">
          {places.map((group, g) => (
            <ul key={group.label} className={clsx(g > 0 && "mt-[23px]")}>
              <li
                className={clsx(
                  "flex h-[23px] items-center gap-[5px] pl-[19px]",
                  g === 0 && "rounded-[3px] bg-linear-to-b from-[#f8f8f8] to-[#e5e5e5] shadow-[inset_0_0_0_1px_#d9d9d9]",
                )}
              >
                {group.icon}
                {group.label}
              </li>
              {group.children.map((p) => (
                <li key={p.label} className="flex h-[23px] items-center gap-[5px] pl-[29px] whitespace-nowrap">
                  {p.icon}
                  {p.label}
                </li>
              ))}
            </ul>
          ))}
        </div>
        <ScrollTrack>
          <ScrollThumb className="h-[220px]" />
        </ScrollTrack>
        <div className="ml-px flex min-w-0 flex-1 flex-col border-l border-[#d6e5f5]">
          <div className="relative flex h-[27px] items-center pl-[15px] text-[#4c607a]">
            <span className="w-[257px] pl-[3px]">名称</span>
            <span className="flex h-full w-[120px] items-center border-l border-[#dfeaf7] pl-1.5">修改日期</span>
            <span className="flex h-full w-[120px] items-center border-l border-[#dfeaf7] pl-1.5">类型</span>
            <span className="flex h-full w-[81px] items-center border-r border-l border-[#dfeaf7] pl-1.5">大小</span>
            <Caret color="#5c93b5" className="absolute top-[2px] left-[139px] h-[3px] w-1.5 rotate-180" />
          </div>
          <div className="min-h-0 flex-1 overflow-hidden pl-[15px]">
            <table className="-mt-2.5 w-[574px] table-fixed border-separate border-spacing-0 text-[#6d6d6d]">
              <colgroup>
                <col className="w-[260px]" />
                <col className="w-[120px]" />
                <col className="w-[120px]" />
                <col className="w-[74px]" />
              </colgroup>
              <tbody>
                {files.map(([name, date, size]) => (
                  <tr
                    key={name}
                    className={clsx(
                      "h-[21px]",
                      name === selectedFile && "rounded-[2px] bg-linear-to-b from-[#dcebfd] to-[#c2dcfd] outline-1 -outline-offset-1 outline-[#7da2ce]",
                    )}
                  >
                    <td className="p-0 pl-1 text-black">
                      <span className="flex items-center gap-1 whitespace-nowrap">
                        <ExcelIcon />
                        {name}
                      </span>
                    </td>
                    <td className="p-0 pl-1 whitespace-nowrap">{date}</td>
                    <td className="p-0 pl-1 whitespace-nowrap">Microsoft Excel ...</td>
                    <td className="p-0 pr-1 text-right whitespace-nowrap">{size}</td>
                  </tr>
                ))}
              </tbody>
            </table>
          </div>
        </div>
        <ScrollTrack>
          <div className="flex-1" />
          <ScrollThumb className="h-[90px]" />
          <div className="h-[27px]" />
        </ScrollTrack>
      </div>

      <div className="relative h-[84px] bg-[#f0f0f0] pt-[11px]">
        <Highlight className="top-[6px] left-[185px] h-[55px] w-[358px]" />
        <div className="flex h-[25px] items-center pr-[17px]">
          <label htmlFor="file-name" className="w-[186px] text-right">
            文件名(<u>N</u>):
          </label>
          <div className="ml-1.5 flex h-full flex-1 items-center border border-[#e2e3ea] border-t-[#abadb3] bg-white pr-1 pl-[3px]">
            <input id="file-name" defaultValue={selectedFile} className="min-w-0 flex-1 bg-transparent pt-px" />
            <Caret />
          </div>
          <span className="relative ml-3 h-full w-[188px]">
            <select aria-label="文件类型" className="h-full w-full appearance-none rounded-[3px] border border-[#707070] bg-linear-to-b from-[#f2f2f2] from-45% to-[#d6d6d6] to-50% pl-[3px]">
              <option>自定义文件 (*.xls;*.xlsx)</option>
            </select>
            <span className="pointer-events-none absolute top-[11px] right-[5px] flex">
              <Caret />
            </span>
          </span>
        </div>
        <div className="mt-[7px] flex justify-end gap-3.5 pr-[18px]">
          <div className={clsx(winButton, "w-[86px] border-[#3c7fb1] shadow-[inset_0_0_0_1px_#48d0f5]")}>
            <button type="button" className="flex-1 pr-0.5 text-center">
              打开(O)
            </button>
            <button type="button" aria-label="更多打开方式" className="flex h-[22px] w-4 items-center justify-center border-l border-[#707070]">
              <Caret className="h-[6px] w-[11px]" />
            </button>
          </div>
          <button type="button" className={clsx(winButton, "w-[86px] border-[#707070]")}>
            取消
          </button>
        </div>
        <svg viewBox="0 0 8 8" className="absolute right-[3px] bottom-[2px] h-2 w-2" fill="#b8b8b8" aria-hidden="true">
          <path d="M6 0h2v2H6zM6 3h2v2H6zM6 6h2v2H6zM3 3h2v2H3zM3 6h2v2H3zM0 6h2v2H0z" />
        </svg>
      </div>
    </section>
  );
}

export default function App() {
  return (
    <div className="relative flex min-h-screen flex-col bg-white pt-px font-['Noto_Sans','Noto_Sans_CJK_SC',sans-serif]">
      <TopBar />
      <div className="flex flex-1 items-stretch">
        <Sidebar />
        <main className="relative flex min-w-0 flex-1 flex-col">
          <button
            type="button"
            className="absolute top-[422px] left-0 flex h-[75px] w-4 flex-col items-center rounded-r-[3px] bg-[#a3a3a3] pt-2.5 text-xs leading-[18px] text-white shadow-[1px_1px_3px_#9c9cf0]"
          >
            <span className="mb-1.5 flex h-4 w-4 shrink-0 items-center justify-center rounded-full bg-white">
              <svg viewBox="0 0 6 6" className="h-1.5 w-1.5" fill="#666" aria-hidden="true">
                <path d="M6 0v6L0 3z" />
              </svg>
            </span>
            <span className="w-3">收起</span>
          </button>
          <Toolbar />
          <div className="flex-1 pt-2.5 pr-3.5 pl-[15px] shadow-[inset_-14px_6px_14px_-12px_rgba(0,0,0,0.3)]">
            <BugTable />
            <Pager />
          </div>
        </main>
      </div>
      <FileDialog />
    </div>
  );
}
